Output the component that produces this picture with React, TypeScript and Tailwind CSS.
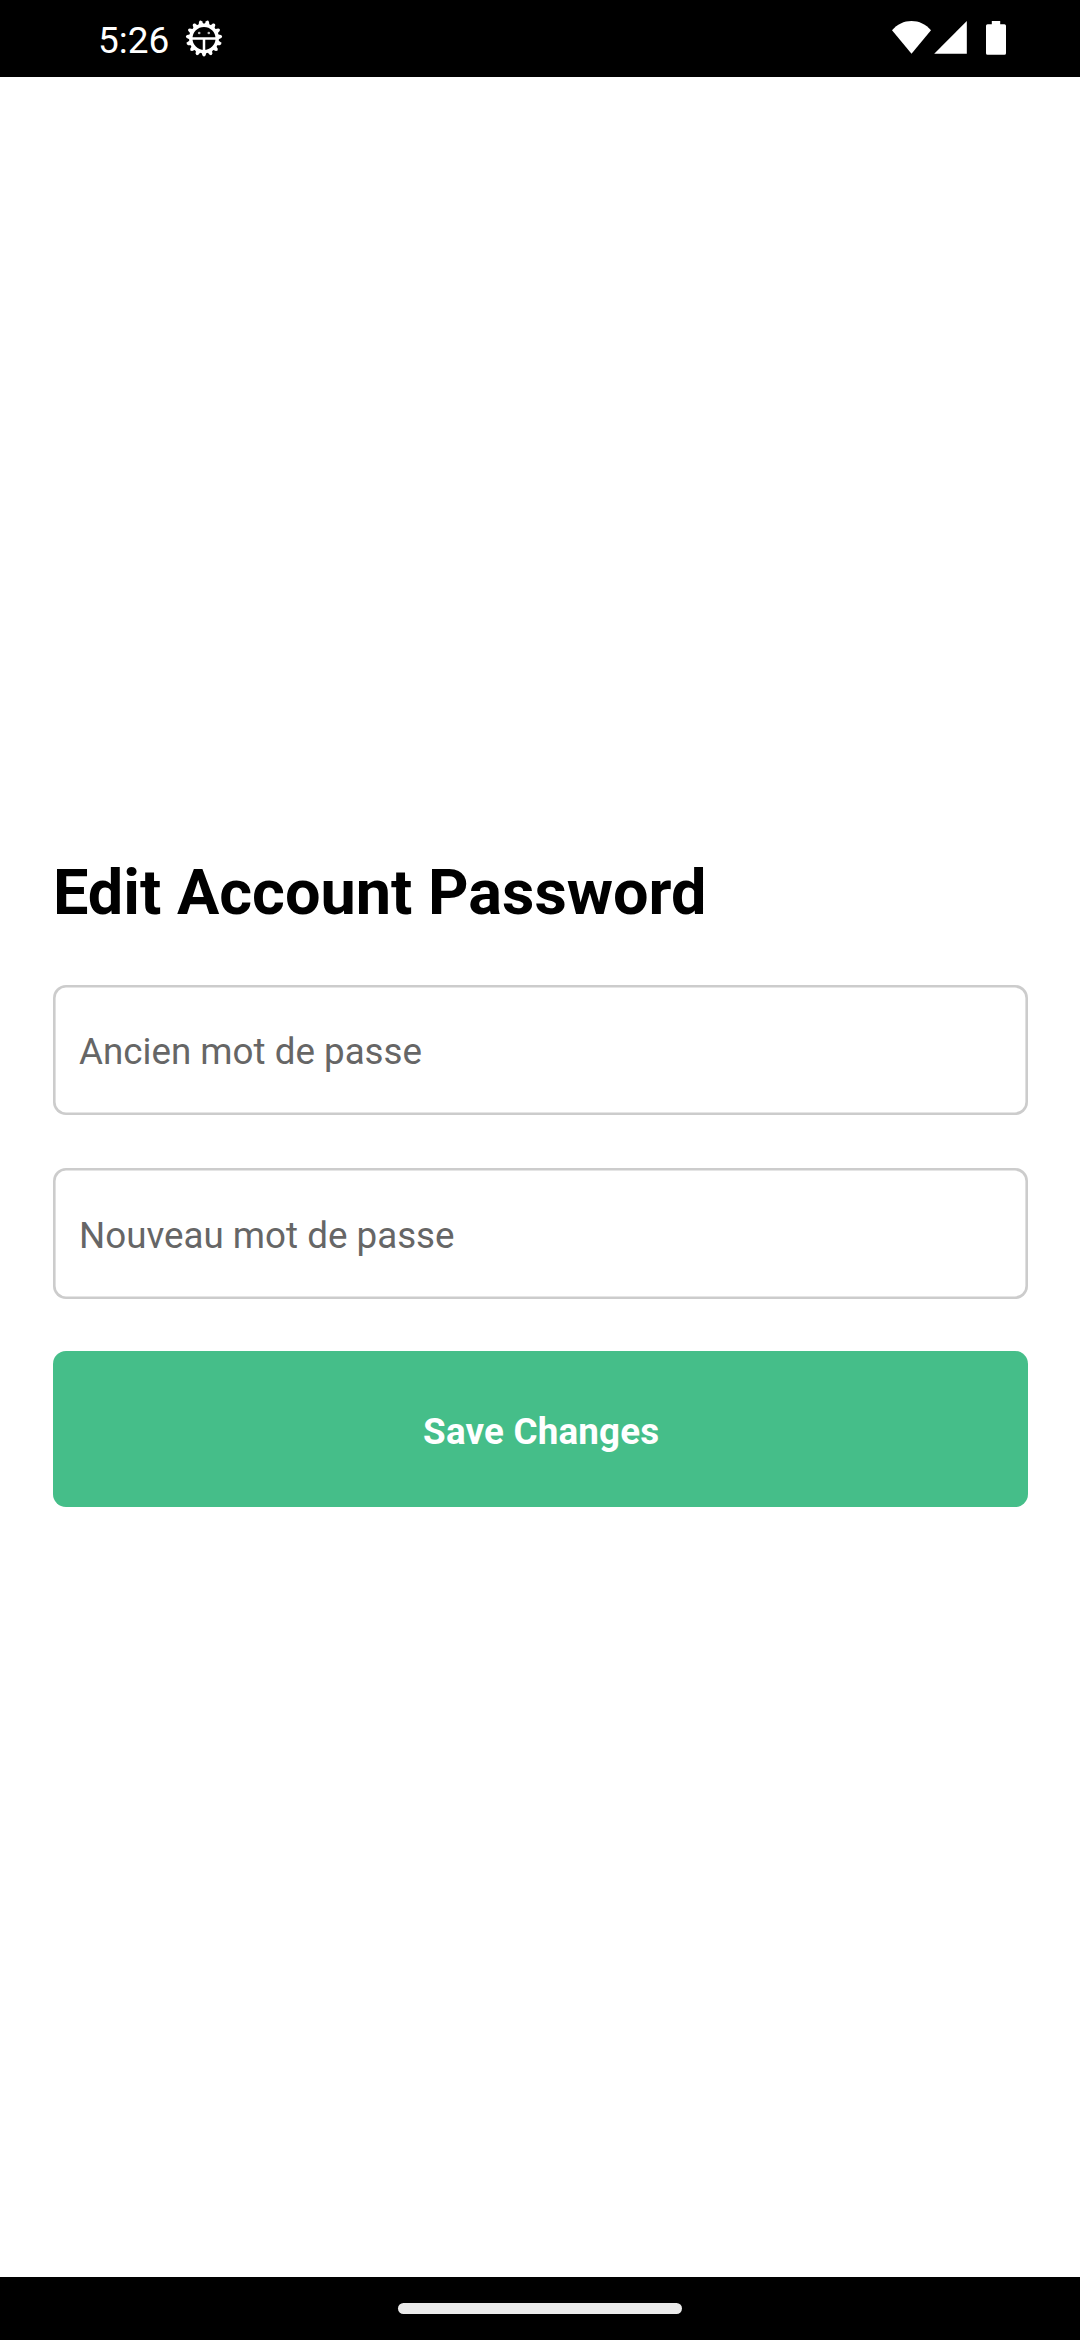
import React from "react";

const teeth = Array.from({ length: 15 }, (_, i) => 180 + i * 24);

function GearFaceIcon() {
  return (
    <svg className="size-[38px]" viewBox="-19 -18.4 38 38">
      {teeth.map((angle) => (
        <path
          key={angle}
          d="M-2.7 -13.5 L-1.5 -17.2 Q0 -19.2 1.5 -17.2 L2.7 -13.5 Z"
          fill="#fff"
          transform={`rotate(${angle})`}
        />
      ))}
      <circle r="13.2" fill="none" stroke="#fff" strokeWidth="3.4" />
      <path d="M-12 0H12M0 0V12" stroke="#fff" strokeWidth="2.5" fill="none" />
      <circle cx="-4.8" cy="-5.4" r="1.3" fill="#bbb" />
      <circle cx="4.8" cy="-5.4" r="1.3" fill="#bbb" />
    </svg>
  );
}

function StatusBar() {
  return (
    <header className="flex h-[77px] shrink-0 items-start bg-black pl-[98px] pr-[74px] text-white">
      <span className="mt-[19px] w-[71px] text-[37px] leading-[44px]">5:26</span>
      <span className="ml-4 mt-[20px]">
        <GearFaceIcon />
      </span>
      <span className="ml-auto mt-[21px] flex">
        <svg className="h-[34px] w-[39px]" viewBox="0 0 39 34" fill="#fff">
          <path d="M19.5 32.7 L0 9.3 C5 3.3 12 0 19.5 0 C27 0 34 3.3 39 9.3 Z" />
        </svg>
        <svg className="ml-[3px] h-[34px] w-[33px]" viewBox="0 0 33 34" fill="#fff">
          <path d="M0.2 32.7 L32.8 0 V32.7 Z" />
        </svg>
        <svg className="ml-[19px] h-[34px] w-5" viewBox="0 0 20 34" fill="#fff">
          <path d="M5.8 0H14.2V3.2H18.4Q20 3.2 20 4.8V32.2Q20 33.8 18.4 33.8H1.6Q0 33.8 0 32.2V4.8Q0 3.2 1.6 3.2H5.8Z" />
        </svg>
      </span>
    </header>
  );
}

function PasswordField({ placeholder, className }: { placeholder: string; className: string }) {
  return (
    <input
      type="password"
      placeholder={placeholder}
      className={`block w-full rounded-[13px] bg-white px-[26px] text-[36.75px] text-[#666] shadow-[inset_0_0_0_2.6px_#ccc] outline-none placeholder:text-[#666] placeholder:opacity-100 ${className}`}
    />
  );
}

export default function App() {
  return (
    <div className="flex h-[2340px] w-[1080px] flex-col bg-white font-['Roboto',sans-serif]">
      <StatusBar />
      <main className="flex grow flex-col pl-[53px] pr-[52px] pt-[779px]">
        <h1 className="h-[129px] text-[63px] font-bold leading-[74px] text-black">
          Edit Account Password
        </h1>
        <form className="flex flex-col">
          <PasswordField placeholder="Ancien mot de passe" className="h-[130px] pt-[2px]" />
          <PasswordField placeholder="Nouveau mot de passe" className="mt-[53px] h-[131px] pt-[3px]" />
          <button
            type="button"
            className="mt-[52px] h-[156px] w-full rounded-[13px] bg-[#45be89] pl-[1.5px] pt-1.5 text-[36.75px] font-bold tracking-[0.19px] text-white"
          >
            Save Changes
          </button>
        </form>
      </main>
      <footer className="flex h-[63px] shrink-0 justify-center bg-black pt-[26px]">
        <div className="h-[11px] w-[284px] rounded-full bg-[#ebebeb]" />
      </footer>
    </div>
  );
}
